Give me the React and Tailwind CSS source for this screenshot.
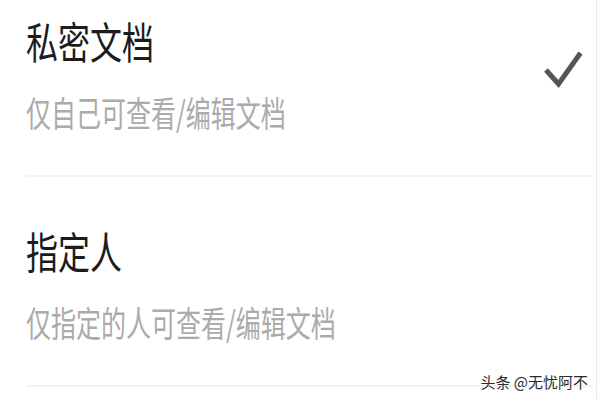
import React from 'react';

const CJK = { fontFamily: '"Noto Sans CJK SC", "Noto Sans", sans-serif' };

const CheckMark = () => (
  <svg width="40" height="40" viewBox="0 0 40 40" className="shrink-0">
    <path d="M3 21 L15.5 35 L37.5 4" fill="none" stroke="#555555" strokeWidth="5" strokeLinejoin="miter" />
  </svg>
);

const OptionRow = ({ title, desc, checked, first }) => (
  <div className={`flex items-start ${first ? 'pt-[16px]' : 'pt-[49px]'}`}>
    <div className="flex-1 pl-[26px]">
      <div className="text-[32px] leading-[48px] text-[#1c1c1c] scale-y-[1.35]">{title}</div>
      <div className="mt-[28px] text-[25px] leading-[40px] text-[#ababab] scale-y-[1.4]">{desc}</div>
    </div>
    {checked && (
      <div className="mt-[33px] mr-[10px]">
        <CheckMark />
      </div>
    )}
  </div>
);

const App = () => {
  return (
    <div className="relative flex w-[600px] h-[400px] overflow-hidden bg-white" style={CJK}>
      <div className="flex-1">
        <OptionRow title="私密文档" desc="仅自己可查看/编辑文档" checked first />
        <div className="mt-[43px] ml-[26px] h-[2px] bg-[#f2f2f2]" />
        <OptionRow title="指定人" desc="仅指定的人可查看/编辑文档" />
        <div className="mt-[43px] ml-[26px] h-[2px] bg-[#f2f2f2]" />
      </div>
      <div className="ml-[3px] w-[1px] bg-[#f5e4e7]" />
      <div className="w-[3px]" />
      <div className="absolute right-[12px] bottom-[10px] text-[15px] leading-[16px] text-[#2a2a2a] [text-shadow:0_0_2px_#fff]">
        头条 @无忧阿不
      </div>
    </div>
  );
};

export default App;
